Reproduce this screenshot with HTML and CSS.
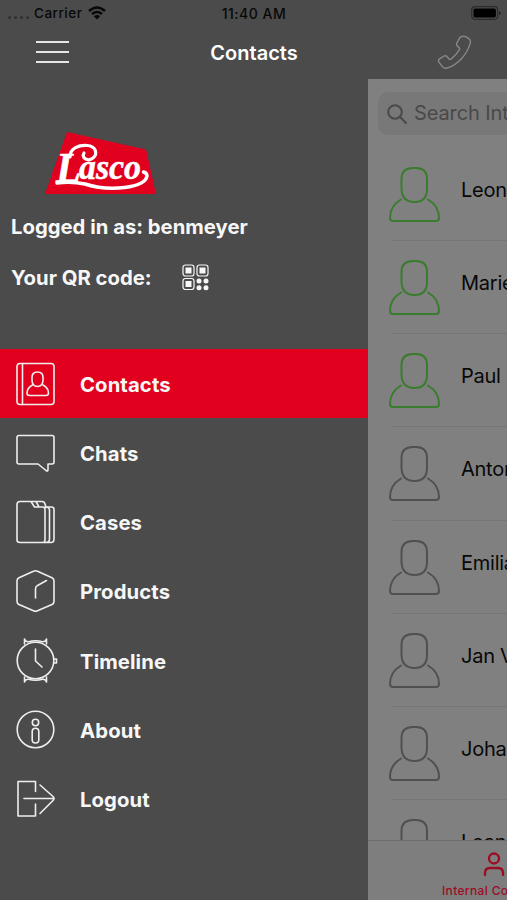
FILE: index.html
```html
<!DOCTYPE html>
<html lang="en">
<head>
<meta charset="utf-8">
<title>Contacts</title>
<link rel="stylesheet" href="styles.css">
</head>
<body>
<svg class="defs" aria-hidden="true">
  <symbol id="person" viewBox="0 0 52 57">
    <path d="M25 2h3q11 0 11 11v10q0 13-12.500 13T13.500 23V13Q13.500 2 25 2Z"/>
    <path d="M13 33.500Q2 40 2 52q0 3 3 3h43q3 0 3-3Q51 40 40 33.500"/>
  </symbol>
</svg>
<div class="screen">
  <header class="status">
    <div class="status-left"><span class="dots"><i></i><i></i><i></i><i></i></span><span class="carrier">Carrier</span>
      <svg class="wifi" viewBox="0 0 18 14"><path d="M1 5Q9-2 17 5M4 8q5-4 10 0"/><path class="fill" d="M9 13.500 5.800 10.200Q9 7.800 12.200 10.200Z"/></svg>
    </div>
    <div class="time">11:40 AM</div>
    <svg class="battery" viewBox="0 0 32 14"><rect class="case" x=".7" y=".7" width="26" height="12.600" rx="3.500"/><rect x="2.500" y="2.500" width="22.400" height="9" rx="1.800"/><path d="M28.500 5q2 2 0 4Z"/></svg>
  </header>
  <nav class="navbar">
    <div class="burger"><i></i><i></i><i></i></div>
    <h1>Contacts</h1>
    <svg class="phone" viewBox="0 0 36 36"><path d="M25.500 1.500q2-.8 4.500.4l3 2q2 1.500 1.200 4.500C31 20 22 30 10.500 34q-3 1-5-1.500L2 28q-1.200-2 .6-3.500l4.500-2.700q2-1 3.500.8l1.500 1.800q1 1.200 2.600.2 5-3.800 8.200-9.200 1-1.600-.4-2.700l-1.500-1.200q-1.500-1.500-.5-3.300l2.600-5q.8-1.300 2.400-1.700Z"/></svg>
  </nav>
  <main>
    <aside>
      <svg class="logo" viewBox="0 0 112 63">
        <path class="plate" d="M22 0 101 17.500 111 62H0Z"/>
        <text class="cap" x="11" y="50" textLength="25" lengthAdjust="spacingAndGlyphs">L</text>
        <text x="34" y="47" textLength="62" lengthAdjust="spacingAndGlyphs">asco</text>
        <path class="swash" d="M25 25C25 16 34 13 42 13.500 51 14 53 22 48 26 43 30 36 26 39 21"/>
        <path class="swash heavy" d="M12 51Q26 49 40 52C65 60 100 56 102 44Q102 41 98.500 40"/>
      </svg>
      <p class="user">Logged in as: benmeyer</p>
      <p class="qr"><span>Your QR code:</span>
        <svg viewBox="0 0 27 27"><g class="frame"><rect x="1" y="1" width="11" height="11" rx="2.500"/><rect x="15" y="1" width="11" height="11" rx="2.500"/><rect x="1" y="14.500" width="11" height="11" rx="2.500"/></g><path d="M3.500 3.500h6v6h-6zM17.500 3.500h6v6h-6zM3.500 17h6v6h-6z"/><g><circle cx="17" cy="17" r="2.500"/><circle cx="24" cy="17" r="2.500"/><circle cx="17" cy="23.700" r="2.500"/><circle cx="24" cy="23.700" r="2.500"/></g></svg>
      </p>
      <ul class="menu">
        <li class="active"><svg viewBox="0 0 44 46"><rect x="3" y="2.500" width="37" height="41" rx="3"/><path d="M8.500 2.500v41M23.500 11q5.500 0 5.500 5.500v2.500q0 6.500-5.500 6.500T18 19v-2.500q0-5.500 5.500-5.500M18.500 24Q13 27 13 32q0 2.500 2.500 2.500h16.500q2.500 0 2.500-2.500Q34.500 27 29 24"/></svg><span>Contacts</span></li>
        <li><svg viewBox="0 0 44 46"><path d="M5 5.500h33q2 0 2 2V32q0 2-2 2h-4v5.500q0 2.500-2 1L24 34H5q-2 0-2-2V7.500q0-2 2-2Z"/></svg><span>Chats</span></li>
        <li><svg viewBox="0 0 44 46"><path d="M6 2.500h11l3.500 5.500h8q2.500 0 2.500 2.500V41q0 2.500-2.500 2.500H6Q3 43.500 3 41V5.500q0-3 3-3ZM17 2.500h5l3 5.500M22 2.500h6q2.500 0 3 2.500l1 3h5.500q2.500 0 2.500 2.500V40q0 3.500-3 3.500H28M31 8q4.500 0 4.500 3v29q0 3.500-4 3.500"/></svg><span>Cases</span></li>
        <li><svg viewBox="0 0 44 46"><path d="m23.500 3.300 14.500 6.500q2 1 2 3v20.700q0 2-2 3l-14.500 6.300q-2 1-4 0L5 36.500q-2-1-2-3V12.800q0-2 2-3l14.500-6.500q2-1 4 0ZM21.500 30V21q0-2.500 2-3.500l9-5"/></svg><span>Products</span></li>
        <li><svg viewBox="0 0 44 46"><circle cx="21.500" cy="22.500" r="18.300"/><path d="M21.500 11v12l6.500 6M10.500 6V1q1.200 3 4 2.700 7-2 14 0Q31.300 4 32.500 1v5M10.500 39v5q1.200-3 4-2.700 7 2 14 0 2.800-.3 4 2.700v-5M40 21h2.500v4H40"/></svg><span>Timeline</span></li>
        <li><svg viewBox="0 0 44 46"><circle cx="21.500" cy="22.500" r="18.300"/><circle cx="21.500" cy="15.500" r="3.200"/><rect x="18.200" y="21.300" width="6.600" height="14.700" rx="3.300"/></svg><span>About</span></li>
        <li><svg viewBox="0 0 44 46"><path d="M21.500 15.500V5.500H4v34.500h17.500V28M10 22.500h29M26 9l13 11.500q2 2 0 4L26 37.500"/></svg><span>Logout</span></li>
      </ul>
    </aside>
    <section class="list">
      <div class="search"><svg viewBox="0 0 20 20"><circle cx="8" cy="8" r="6.800"/><path d="m13 13 6 6"/></svg><span>Search Internal</span></div>
      <ul class="people">
        <li class="on"><svg><use href="#person"/></svg><span>Leon</span></li>
        <li class="on"><svg><use href="#person"/></svg><span>Marie</span></li>
        <li class="on"><svg><use href="#person"/></svg><span>Paul</span></li>
        <li><svg><use href="#person"/></svg><span>Anton</span></li>
        <li><svg><use href="#person"/></svg><span>Emilia</span></li>
        <li><svg><use href="#person"/></svg><span>Jan V</span></li>
        <li><svg><use href="#person"/></svg><span>Johanna</span></li>
        <li><svg><use href="#person"/></svg><span>Leana</span></li>
      </ul>
      <footer class="tab"><svg viewBox="0 0 22 24"><circle cx="11" cy="6.500" r="5"/><path d="M2 23v-2q0-5 5-5h8q5 0 5 5v2"/></svg><span>Internal Contacts</span></footer>
    </section>
  </main>
</div>
</body>
</html>
```
FILE: styles.css
```css
* { box-sizing: border-box; }
body { margin: 0; font-family: Inter, "Liberation Sans", sans-serif; }
ul, p, h1 { margin: 0; padding: 0; list-style: none; }
svg { display: block; flex: none; fill: none; stroke-linecap: round; stroke-linejoin: round; }
.defs { position: absolute; width: 0; height: 0; }
.screen { width: 507px; height: 900px; overflow: hidden; background: #4b4b4b; display: flex; flex-direction: column; }

.status { height: 26px; display: grid; grid-template-columns: 1fr auto 1fr; align-items: center; padding: 0 4px 0 8px; color: #080808; font-size: 13.5px; font-weight: 500; }
.status-left { display: flex; align-items: center; }
.dots { display: flex; gap: 3px; width: 26px; padding-top: 8px; }
.dots i { width: 3px; height: 3px; border-radius: 50%; background: #303030; }
.carrier { letter-spacing: .5px; }
.time { font-size: 14px; letter-spacing: .5px; margin-right: 3px; }
.wifi { width: 18px; height: 14px; margin-left: 6px; stroke: #080808; stroke-width: 2.5; stroke-linecap: butt; }
.wifi .fill { fill: #080808; stroke: none; }
.battery { justify-self: end; width: 32px; height: 14px; fill: #000; }
.battery .case { fill: none; stroke: #2b2b2b; stroke-width: 1.2; }

.navbar { height: 53px; display: grid; grid-template-columns: 1fr auto 1fr; align-items: center; padding: 0 35px 0 36px; color: #fff; }
.navbar h1 { font-size: 20px; font-weight: 600; letter-spacing: .05px; }
.burger { width: 33px; margin-top: -1px; display: flex; flex-direction: column; gap: 8px; }
.burger i { height: 2px; background: #e6e6e6; }
.phone { justify-self: end; width: 35px; height: 35px; stroke: #858585; stroke-width: 1.5; }

main { flex: 1; min-height: 0; display: flex; }
aside { width: 368px; flex: none; color: #f7f7f7; font-size: 20.3px; font-weight: 700; }
.logo { width: 112px; height: 63px; margin: 53px 0 0 45px; }
.logo .plate { fill: #e2001f; }
.logo text { font-family: "Liberation Serif", serif; font-size: 36px; font-style: italic; font-weight: 700; fill: #fff; stroke: #fff; stroke-width: .5; }
.logo .cap { font-size: 42px; }
.logo .swash { stroke: #fff; stroke-width: 3.2; }
.logo .heavy { stroke-width: 3.5; }
.user { margin: 20px 0 0 11px; line-height: 24px; }
.qr { display: flex; align-items: center; height: 28px; margin: 24px 0 0 11px; }
.qr span { width: 171px; }
.qr svg { width: 27px; height: 27px; fill: #f7f7f7; }
.qr .frame { fill: none; stroke: #f7f7f7; stroke-width: 1.2; }
.menu { margin-top: 58px; }
.menu li { height: 69.25px; display: flex; align-items: center; padding-left: 14px; }
.menu li svg { width: 44px; height: 46px; margin-right: 22px; stroke: #eee; stroke-width: 1.6; }
.menu span { margin-top: 1px; letter-spacing: .1px; }
.menu .active { background: #e2001f; }

.list { flex: 1; min-width: 0; overflow: hidden; display: flex; flex-direction: column; background: #808080; color: #080808; white-space: nowrap; }
.search { flex: none; width: 400px; height: 43px; margin: 13px 0 12.6px 10px; padding-left: 9px; border-radius: 10px; background: #787878; color: #494949; display: flex; align-items: center; gap: 7px; font-size: 20px; }
.search svg { width: 20px; height: 20px; stroke: #494949; stroke-width: 2; }
.search span { margin-top: -2px; letter-spacing: -.1px; }
.people { flex: 1; min-height: 0; overflow: hidden; }
.people li { height: 93.25px; margin-left: 24px; border-bottom: 1px solid #767676; display: flex; align-items: center; font-size: 20px; }
.people li svg { width: 52px; height: 57px; margin: 1px 21px 0 -4px; stroke: #505050; stroke-width: 2; }
.people .on svg { stroke: #397c2d; }
.people span { margin-top: -8px; letter-spacing: -.25px; }
.tab { flex: none; width: 252px; height: 60px; border-top: 1px solid #6c6c6c; background: #7e7e7e; color: #9d0c25; display: flex; flex-direction: column; align-items: center; padding-top: 11px; font-size: 12px; font-weight: 500; }
.tab svg { width: 22px; height: 24px; stroke: #9d0c25; stroke-width: 2.3; }
.tab span { margin-top: 7px; letter-spacing: .35px; }
```
